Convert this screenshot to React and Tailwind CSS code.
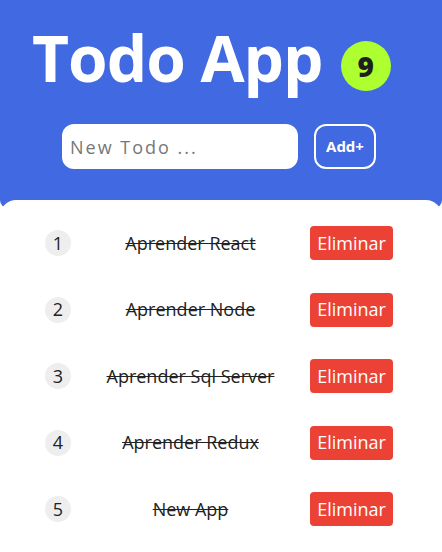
import React from "react";

const todos = [
  { id: 1, text: "Aprender React" },
  { id: 2, text: "Aprender Node" },
  { id: 3, text: "Aprender Sql Server" },
  { id: 4, text: "Aprender Redux" },
  { id: 5, text: "New App" },
];

export default function App() {
  return (
    <div
      className="min-h-[552px] bg-white"
      style={{ fontFamily: '"Open Sans", "Noto Sans", sans-serif' }}
    >
      <div className="bg-[#4169e1] h-[208px] rounded-b-[8px] pt-[8px]">
        <div className="flex items-start pl-[32px] gap-[18px]">
          <h1 className="text-white font-bold text-[64px] leading-[100px] tracking-[-1px]">
            Todo App
          </h1>
          <span className="w-[50px] h-[50px] rounded-full bg-[#adff2f] flex items-center justify-center text-[#1f1f1f] font-extrabold text-[28px] mt-[33px]">
            9
          </span>
        </div>
        <div className="flex gap-[16px] mt-[16px] pl-[62px]">
          <input
            placeholder="New Todo ..."
            className="w-[236px] h-[45px] rounded-[12px] bg-white px-[8px] text-[18px] tracking-[2px] text-[#333] placeholder:text-[#777] outline-none"
          />
          <button className="w-[62px] h-[45px] rounded-[12px] border-2 border-white text-white font-bold text-[15px]">
            Add+
          </button>
        </div>
      </div>
      <div className="bg-white rounded-t-[16px] -mt-[8px] relative pt-[26px]">
        <ul className="w-[348px] ml-[45px] flex flex-col gap-[32.5px]">
          {todos.map((t) => (
            <li key={t.id} className="flex items-center h-[34px]">
              <span className="w-[26px] h-[26px] rounded-full bg-[#eeeeee] flex items-center justify-center text-[18px] text-[#222]">
                {t.id}
              </span>
              <span className="flex-1 text-center text-[18px] text-[#222] line-through">
                {t.text}
              </span>
              <button className="w-[83px] h-[34px] rounded-[4px] bg-[#ec4236] text-white text-[18px]">
                Eliminar
              </button>
            </li>
          ))}
        </ul>
      </div>
    </div>
  );
}
